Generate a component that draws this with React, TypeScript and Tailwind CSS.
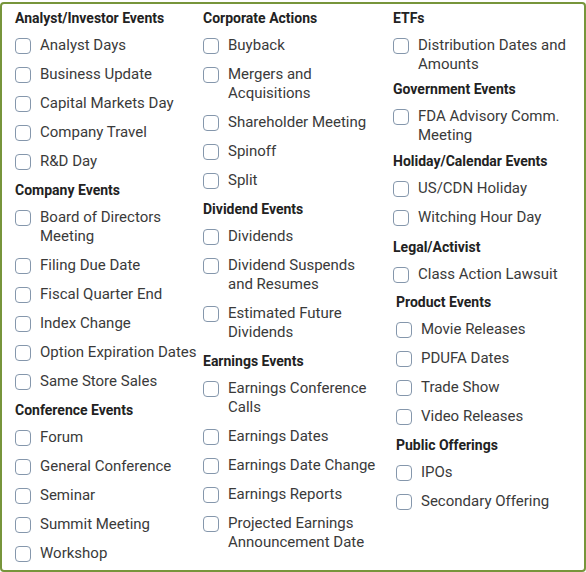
//External Imports
import { useState } from "react";

//Setup the Group Type
type Group = {
	title: string;
	items: string[];
	top?: string;
	shift?: boolean;
};

//Setup the Text Widths of Each Column
const widths = ["max-w-[160px]", "max-w-[150px]", "max-w-[155px]"];

//Setup the Columns of Event Groups
const columns: Group[][] = [
	[
		{
			title: "Analyst/Investor Events",
			items: ["Analyst Days", "Business Update", "Capital Markets Day", "Company Travel", "R&D Day"],
			top: "pt-[4px] pb-[1px]"
		},
		{
			title: "Company Events",
			items: [
				"Board of Directors Meeting",
				"Filing Due Date",
				"Fiscal Quarter End",
				"Index Change",
				"Option Expiration Dates",
				"Same Store Sales"
			]
		},
		{
			title: "Conference Events",
			items: ["Forum", "General Conference", "Seminar", "Summit Meeting", "Workshop"]
		}
	],
	[
		{
			title: "Corporate Actions",
			items: ["Buyback", "Mergers and Acquisitions", "Shareholder Meeting", "Spinoff", "Split"],
			top: "pt-[4px] pb-[1px]"
		},
		{
			title: "Dividend Events",
			items: ["Dividends", "Dividend Suspends and Resumes", "Estimated Future Dividends"]
		},
		{
			title: "Earnings Events",
			items: [
				"Earnings Conference Calls",
				"Earnings Dates",
				"Earnings Date Change",
				"Earnings Reports",
				"Projected Earnings Announcement Date"
			]
		}
	],
	[
		{ title: "ETFs", items: ["Distribution Dates and Amounts"], top: "pt-[4px] pb-[1px]" },
		{ title: "Government Events", items: ["FDA Advisory Comm. Meeting"], top: "pt-[2px] pb-[1px]" },
		{
			title: "Holiday/Calendar Events",
			items: ["US/CDN Holiday", "Witching Hour Day"],
			top: "pt-[3px] pb-[1px]"
		},
		{ title: "Legal/Activist", items: ["Class Action Lawsuit"], top: "pt-[7px] pb-[1px]" },
		{
			title: "Product Events",
			items: ["Movie Releases", "PDUFA Dates", "Trade Show", "Video Releases"],
			top: "pt-[5px] pb-[1px]",
			shift: true
		},
		{ title: "Public Offerings", items: ["IPOs", "Secondary Offering"], shift: true }
	]
];

//Setup the Checkbox Item
function CheckItem({
	label,
	width,
	checked,
	onToggle
}: {
	label: string;
	width: string;
	checked: boolean;
	onToggle: () => void;
}) {
	return (
		<label className="flex items-start gap-[9px] pt-[7px] pb-[3px] cursor-pointer">
			{/*Setup the Box*/}
			<span className="h-[19px] flex items-center shrink-0">
				<span
					onClick={onToggle}
					className={
						"w-[16px] h-[16px] rounded-[4px] border-[1.5px] border-[#8597ac] " +
						(checked ? "bg-[#5b7fa6]" : "bg-white")
					}
				/>
			</span>

			{/*Setup the Label*/}
			<span className={"text-[15px] leading-[19px] text-[#3a3a3a] " + width}>{label}</span>
		</label>
	);
}

//Setup the Page
export default function App() {
	//Setup the State
	const [checked, setChecked] = useState<Record<string, boolean>>({});

	//Toggles a Checkbox
	function toggle(key: string) {
		setChecked({ ...checked, [key]: !checked[key] });
	}

	//Return the Page's Content
	return (
		<div
			className="w-[586px] h-[572px] bg-white pt-[2px]"
			style={{ fontFamily: "Roboto, 'Liberation Sans', sans-serif" }}
		>
			{/*Setup the Framed Box*/}
			<div className="h-[570px] border-2 border-[#77953b] rounded-[4px] pl-[13px] grid grid-cols-[188px_190px_1fr]">
				{columns.map((groups, c) => (
					<div key={c} className="flex flex-col">
						{groups.map(group => (
							<div key={group.title} className={group.shift ? "pl-[3px]" : ""}>
								{/*Setup the Group Title*/}
								<div
									className={
										"text-[14px] leading-[20px] font-bold text-[#222222] " +
										(group.top ?? "pt-[6px] pb-[1px]")
									}
								>
									{group.title}
								</div>

								{/*Setup the Group Items*/}
								{group.items.map(item => (
									<CheckItem
										key={item}
										label={item}
										width={widths[c]}
										checked={!!checked[item]}
										onToggle={() => toggle(item)}
									/>
								))}
							</div>
						))}
					</div>
				))}
			</div>
		</div>
	);
}
